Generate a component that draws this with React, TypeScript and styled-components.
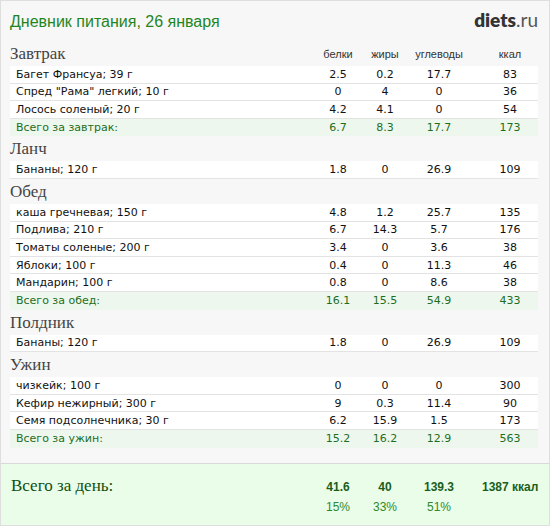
import styled, { createGlobalStyle } from "styled-components";

const GlobalStyle = createGlobalStyle`
  body {
    margin: 0;
    background: #ffffff;
  }
`;

type Food = { name: string; values: (string | number)[] };
type Meal = { title: string; foods: Food[]; total?: (string | number)[]; totalLabel?: string };

const COLUMNS = "1fr 46px 48px 60px 69px";

const meals: Meal[] = [
  {
    title: "Завтрак",
    foods: [
      { name: "Багет Франсуа; 39 г", values: [2.5, 0.2, 17.7, 83] },
      { name: "Спред \"Рама\" легкий; 10 г", values: [0, 4, 0, 36] },
      { name: "Лосось соленый; 20 г", values: [4.2, 4.1, 0, 54] },
    ],
    totalLabel: "Всего за завтрак:",
    total: [6.7, 8.3, 17.7, 173],
  },
  {
    title: "Ланч",
    foods: [{ name: "Бананы; 120 г", values: [1.8, 0, 26.9, 109] }],
  },
  {
    title: "Обед",
    foods: [
      { name: "каша гречневая; 150 г", values: [4.8, 1.2, 25.7, 135] },
      { name: "Подлива; 210 г", values: [6.7, 14.3, 5.7, 176] },
      { name: "Томаты соленые; 200 г", values: [3.4, 0, 3.6, 38] },
      { name: "Яблоки; 100 г", values: [0.4, 0, 11.3, 46] },
      { name: "Мандарин; 100 г", values: [0.8, 0, 8.6, 38] },
    ],
    totalLabel: "Всего за обед:",
    total: [16.1, 15.5, 54.9, 433],
  },
  {
    title: "Полдник",
    foods: [{ name: "Бананы; 120 г", values: [1.8, 0, 26.9, 109] }],
  },
  {
    title: "Ужин",
    foods: [
      { name: "чизкейк; 100 г", values: [0, 0, 0, 300] },
      { name: "Кефир нежирный; 300 г", values: [9, 0.3, 11.4, 90] },
      { name: "Семя подсолнечника; 30 г", values: [6.2, 15.9, 1.5, 173] },
    ],
    totalLabel: "Всего за ужин:",
    total: [15.2, 16.2, 12.9, 563],
  },
];

const headers = ["белки", "жиры", "углеводы", "ккал"];

const Page = styled.div`
  width: 550px;
  height: 526px;
  box-sizing: border-box;
  border: 1px solid #dedede;
  background: #f7f7f7;
  display: flex;
  flex-direction: column;
  overflow: hidden;
`;

const TopBar = styled.div`
  height: 40px;
  box-sizing: border-box;
  padding: 7px 11px 0 9px;
  display: flex;
  justify-content: space-between;
  align-items: baseline;
`;

const Title = styled.h1`
  margin: 0;
  font-family: "Liberation Sans", Arial, sans-serif;
  font-weight: normal;
  font-size: 16px;
  color: #1f861f;
`;

const Logo = styled.div`
  font-family: Lato, "Open Sans", sans-serif;
  font-size: 19px;
  color: #3a3a3a;
  b {
    font-weight: 800;
    color: #333;
  }
  span {
    color: #555;
  }
`;

const Body = styled.div`
  padding: 0 11px 0 9px;
`;

const HeadingRow = styled.div`
  display: grid;
  grid-template-columns: ${COLUMNS};
  height: 25px;
  align-items: end;
`;

const MealName = styled.div`
  font-family: "Liberation Serif", "DejaVu Serif", serif;
  font-size: 17px;
  line-height: 1;
  color: #444;
  padding-bottom: 4px;
`;

const ColLabel = styled.div<{ $last?: boolean }>`
  font-family: "Liberation Sans", Arial, sans-serif;
  font-size: 11px;
  color: #333;
  text-align: center;
  padding-bottom: 6px;
  padding-left: ${(p) => (p.$last ? "13px" : "0")};
`;

const Row = styled.div<{ $total?: boolean }>`
  display: grid;
  grid-template-columns: ${COLUMNS};
  height: 17.6px;
  box-sizing: border-box;
  align-items: center;
  background: ${(p) => (p.$total ? "#eef7ee" : "#ffffff")};
  border-bottom: 1px solid ${(p) => (p.$total ? "#eef7ee" : "#e3e3e3")};
  font-family: "DejaVu Sans", Verdana, sans-serif;
  font-size: 11px;
  color: ${(p) => (p.$total ? "#1d6e1d" : "#111")};
`;

const NameCell = styled.div`
  padding-left: 6px;
  white-space: nowrap;
`;

const NumCell = styled.div<{ $last?: boolean }>`
  text-align: center;
  padding-left: ${(p) => (p.$last ? "13px" : "0")};
`;

const DayTotal = styled.div`
  margin-top: auto;
  height: 62px;
  box-sizing: border-box;
  border-top: 1px solid #d9d9d9;
  background: #eafde9;
  padding: 12px 11px 0 9px;
  display: grid;
  grid-template-columns: ${COLUMNS};
  grid-template-rows: 20px 20px;
  row-gap: 4px;
  align-items: baseline;
`;

const DayLabel = styled.div`
  font-family: "Liberation Serif", "DejaVu Serif", serif;
  font-size: 17px;
  color: #0f4f0f;
  padding-left: 1px;
`;

const DayValue = styled.div<{ $last?: boolean }>`
  font-family: "Liberation Sans", Arial, sans-serif;
  font-size: 12px;
  font-weight: bold;
  color: #1b5e1b;
  text-align: center;
  padding-left: ${(p) => (p.$last ? "13px" : "0")};
  white-space: nowrap;
`;

const Percent = styled.div`
  font-family: "Liberation Sans", Arial, sans-serif;
  font-size: 12px;
  color: #2c8a2c;
  text-align: center;
`;

const MealBlock = ({ meal, showHeaders }: { meal: Meal; showHeaders: boolean }) => (
  <div>
    <HeadingRow>
      <MealName>{meal.title}</MealName>
      {showHeaders &&
        headers.map((h, i) => (
          <ColLabel key={h} $last={i === 3}>
            {h}
          </ColLabel>
        ))}
    </HeadingRow>
    {meal.foods.map((food, idx) => (
      <Row key={`${meal.title}-${idx}`}>
        <NameCell>{food.name}</NameCell>
        {food.values.map((v, i) => (
          <NumCell key={i} $last={i === 3}>
            {v}
          </NumCell>
        ))}
      </Row>
    ))}
    {meal.total && (
      <Row $total>
        <NameCell>{meal.totalLabel}</NameCell>
        {meal.total.map((v, i) => (
          <NumCell key={i} $last={i === 3}>
            {v}
          </NumCell>
        ))}
      </Row>
    )}
  </div>
);

const App = () => (
  <>
    <GlobalStyle />
    <Page>
      <TopBar>
        <Title>Дневник питания, 26 января</Title>
        <Logo>
          <b>diets</b>
          <span>.ru</span>
        </Logo>
      </TopBar>
      <Body>
        {meals.map((meal, i) => (
          <MealBlock key={meal.title} meal={meal} showHeaders={i === 0} />
        ))}
      </Body>
      <DayTotal>
        <DayLabel>Всего за день:</DayLabel>
        <DayValue>41.6</DayValue>
        <DayValue>40</DayValue>
        <DayValue>139.3</DayValue>
        <DayValue $last>1387 ккал</DayValue>
        <div />
        <Percent>15%</Percent>
        <Percent>33%</Percent>
        <Percent>51%</Percent>
        <div />
      </DayTotal>
    </Page>
  </>
);

export default App;
